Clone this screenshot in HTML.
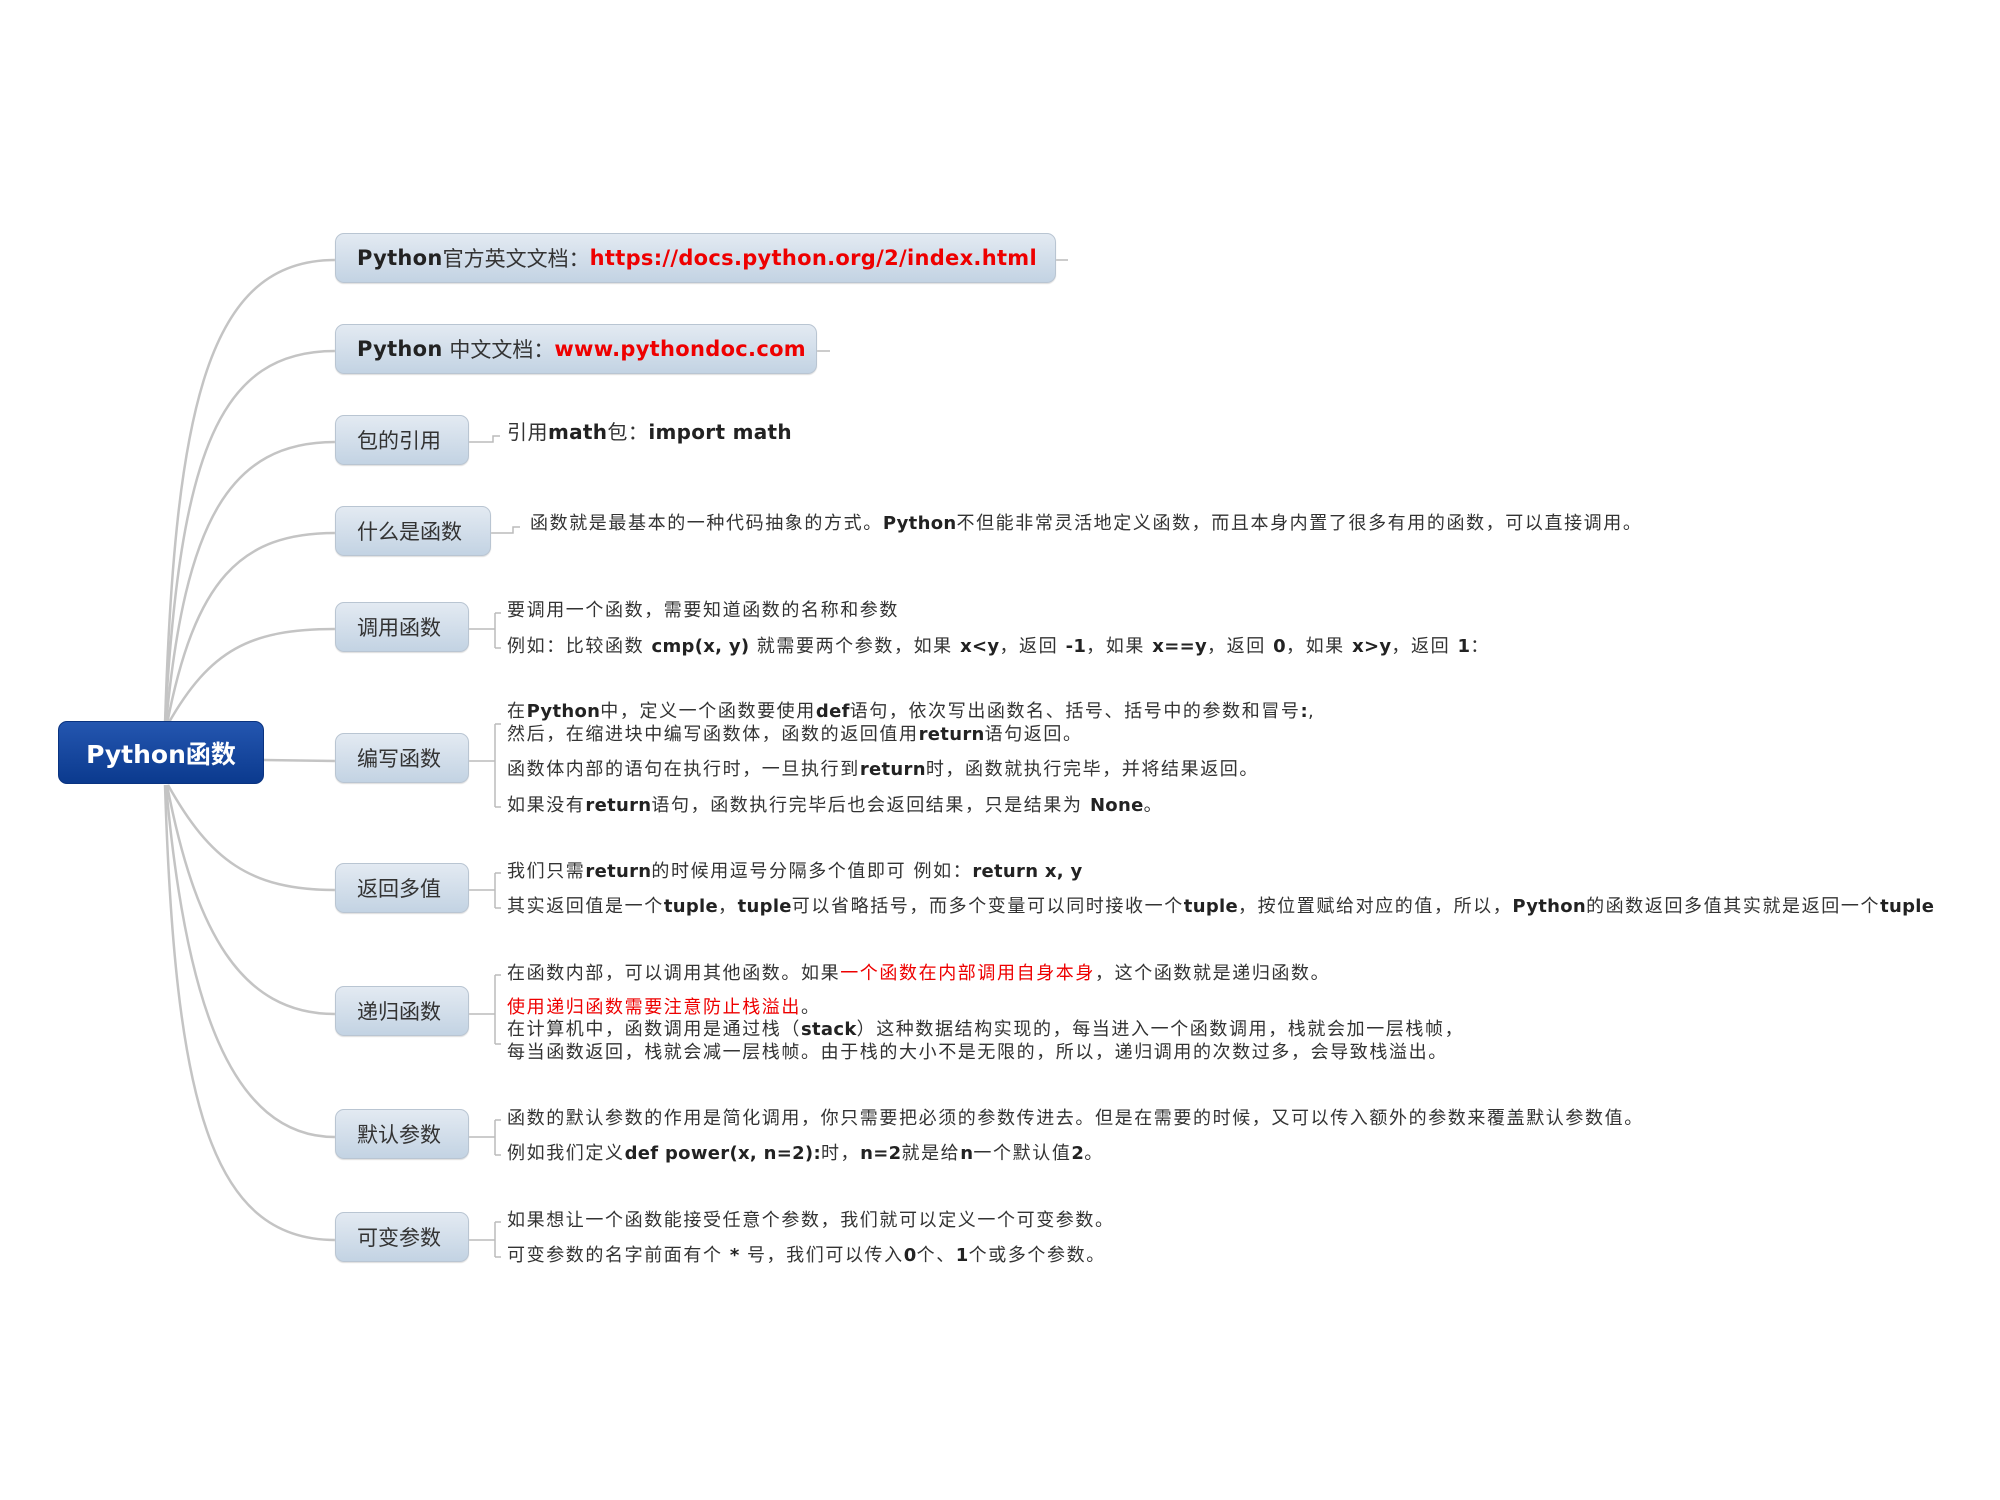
<!DOCTYPE html>
<html><head><meta charset="utf-8"><style>
body{margin:0;width:2000px;height:1500px;background:#fff;position:relative;overflow:hidden;font-family:"DejaVu Sans","Noto Sans CJK SC",sans-serif;}
.b{position:absolute;left:335px;height:50px;border:1px solid #b9c5d2;border-radius:9px;background:linear-gradient(#e3eaf2,#c3d3e3);box-sizing:border-box;display:flex;align-items:center;padding-left:21px;font-size:21px;color:#333;white-space:nowrap;box-shadow:0 1px 1px #ddd;}
.t{position:absolute;left:507px;font-size:18px;color:#333;white-space:nowrap;line-height:22px;letter-spacing:1.6px;}
b{font-weight:bold;color:#222;letter-spacing:0.3px}
.r{color:#e00}
.root{position:absolute;left:58px;top:721px;width:206px;height:63px;border-radius:9px;background:linear-gradient(#2456b0,#0b3a8e);border:1px solid #0a3380;box-sizing:border-box;color:#fff;font-size:25px;font-weight:bold;display:flex;align-items:center;justify-content:center;}
</style></head><body>
<svg width="2000" height="1500" style="position:absolute;left:0;top:0" fill="none" stroke="#c4c4c4" stroke-width="2.5">
<path d="M165 724 C175 400 210 260 335 260"/>
<path d="M165 724 C180 450 220 351 335 351"/>
<path d="M166 724 C185 520 230 442 335 442"/>
<path d="M167 724 C195 580 240 533 335 533"/>
<path d="M168 724 C210 650 250 629 335 629"/>
<path d="M264 760 L335 761"/>
<path d="M168 785 C210 860 250 890 335 890"/>
<path d="M167 785 C195 930 240 1014 335 1014"/>
<path d="M166 785 C185 1000 230 1137 335 1137"/>
<path d="M165 785 C175 1100 210 1240 335 1240"/>
<g stroke-width="1.5" stroke="#bbb">
<path d="M1056 260 H1068"/><path d="M817 351 H830"/>
<path d="M469 442 H493 V436 H500"/>
<path d="M491 533 H513 V527 H520"/>
<path d="M469 629 H495 M495 613 V648 M495 613 H501 M495 648 H501"/>
<path d="M469 761 H495 M495 724 V807 M495 724 H501 M495 807 H501"/>
<path d="M469 890 H495 M495 873 V908 M495 873 H501 M495 908 H501"/>
<path d="M469 1014 H495 M495 975 V1044 M495 975 H501 M495 1044 H501"/>
<path d="M469 1137 H495 M495 1120 V1155 M495 1120 H501 M495 1155 H501"/>
<path d="M469 1240 H495 M495 1222 V1257 M495 1222 H501 M495 1257 H501"/>
</g></svg>
<div class="root">Python函数</div>
<div class="b" style="top:233px;width:721px"><b>Python</b>官方英文文档：<b class="r">https://docs.python.org/2/index.html</b></div>
<div class="b" style="top:324px;width:482px"><b>Python</b>&nbsp;中文文档：<b class="r">www.pythondoc.com</b></div>
<div class="b" style="top:415px;width:134px">包的引用</div>
<div class="b" style="top:506px;width:156px">什么是函数</div>
<div class="b" style="top:602px;width:134px">调用函数</div>
<div class="b" style="top:733px;width:134px">编写函数</div>
<div class="b" style="top:863px;width:134px">返回多值</div>
<div class="b" style="top:986px;width:134px">递归函数</div>
<div class="b" style="top:1109px;width:134px">默认参数</div>
<div class="b" style="top:1212px;width:134px">可变参数</div>

<div class="t" style="top:421px;font-size:20px;letter-spacing:0.5px">引用<b>math</b>包：<b>import math</b></div>
<div class="t" style="top:513px;left:530px">函数就是最基本的一种代码抽象的方式。<b>Python</b>不但能非常灵活地定义函数，而且本身内置了很多有用的函数，可以直接调用。</div>
<div class="t" style="top:600px">要调用一个函数，需要知道函数的名称和参数</div>
<div class="t" style="top:636px">例如：比较函数 <b>cmp(x, y)</b> 就需要两个参数，如果 <b>x&lt;y</b>，返回 <b>-1</b>，如果 <b>x==y</b>，返回 <b>0</b>，如果 <b>x&gt;y</b>，返回 <b>1</b>：</div>
<div class="t" style="top:701px">在<b>Python</b>中，定义一个函数要使用<b>def</b>语句，依次写出函数名、括号、括号中的参数和冒号<b>:</b>,</div>
<div class="t" style="top:724px">然后，在缩进块中编写函数体，函数的返回值用<b>return</b>语句返回。</div>
<div class="t" style="top:759px">函数体内部的语句在执行时，一旦执行到<b>return</b>时，函数就执行完毕，并将结果返回。</div>
<div class="t" style="top:795px">如果没有<b>return</b>语句，函数执行完毕后也会返回结果，只是结果为 <b>None</b>。</div>
<div class="t" style="top:861px">我们只需<b>return</b>的时候用逗号分隔多个值即可 例如：<b>return x, y</b></div>
<div class="t" style="top:896px">其实返回值是一个<b>tuple</b>，<b>tuple</b>可以省略括号，而多个变量可以同时接收一个<b>tuple</b>，按位置赋给对应的值，所以，<b>Python</b>的函数返回多值其实就是返回一个<b>tuple</b></div>
<div class="t" style="top:963px">在函数内部，可以调用其他函数。如果<span class="r">一个函数在内部调用自身本身</span>，这个函数就是递归函数。</div>
<div class="t" style="top:997px"><span class="r">使用递归函数需要注意防止栈溢出</span>。</div>
<div class="t" style="top:1019px">在计算机中，函数调用是通过栈（<b>stack</b>）这种数据结构实现的，每当进入一个函数调用，栈就会加一层栈帧，</div>
<div class="t" style="top:1042px">每当函数返回，栈就会减一层栈帧。由于栈的大小不是无限的，所以，递归调用的次数过多，会导致栈溢出。</div>
<div class="t" style="top:1108px">函数的默认参数的作用是简化调用，你只需要把必须的参数传进去。但是在需要的时候，又可以传入额外的参数来覆盖默认参数值。</div>
<div class="t" style="top:1143px">例如我们定义<b>def power(x, n=2):</b>时，<b>n=2</b>就是给<b>n</b>一个默认值<b>2</b>。</div>
<div class="t" style="top:1210px">如果想让一个函数能接受任意个参数，我们就可以定义一个可变参数。</div>
<div class="t" style="top:1245px">可变参数的名字前面有个 <b>*</b> 号，我们可以传入<b>0</b>个、<b>1</b>个或多个参数。</div>
</body></html>
